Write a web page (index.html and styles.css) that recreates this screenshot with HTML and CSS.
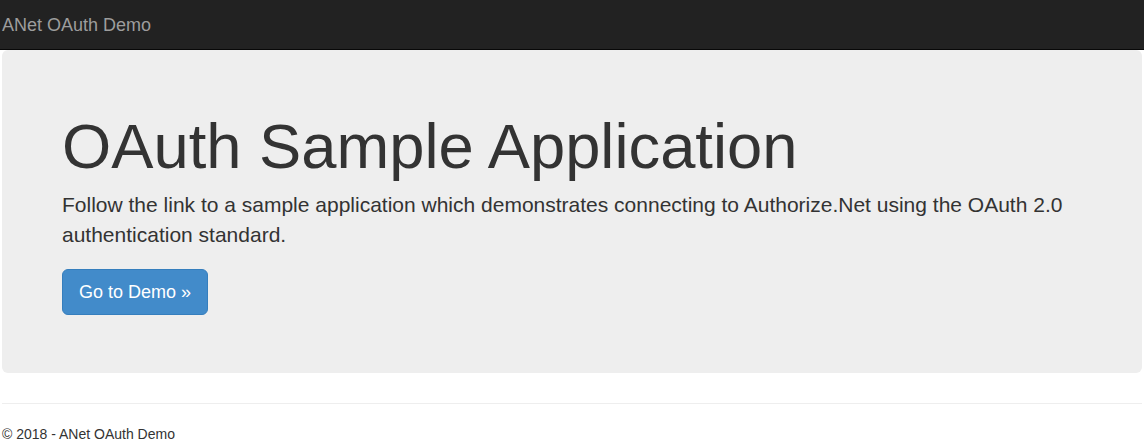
FILE: index.html
```html
<!DOCTYPE html>
<html>
<head>
<meta charset="utf-8">
<title>ANet OAuth Demo</title>
<link rel="stylesheet" href="styles.css">
</head>
<body>
<div class="navbar">
  <div class="container">
    <a class="navbar-brand" href="#">ANet OAuth Demo</a>
  </div>
</div>
<div class="container body-content">
  <div class="jumbotron">
    <h1>OAuth Sample Application</h1>
    <p class="lead">Follow the link to a sample application which demonstrates connecting to Authorize.Net using the OAuth 2.0 authentication standard.</p>
    <p class="actions"><a class="btn btn-primary btn-lg" href="#">Go to Demo &raquo;</a></p>
  </div>
  <hr class="rule">
  <footer class="footer">
    <p>&copy; 2018 - ANet OAuth Demo</p>
  </footer>
</div>
</body>
</html>
```

FILE: styles.css
```css
* { box-sizing: border-box; }
html, body { margin: 0; }
body {
  font-family: "Liberation Sans", Arial, sans-serif;
  font-size: 14px;
  line-height: 1.428571429;
  color: #333;
  background: #fff;
  padding-top: 50px;
}
.navbar {
  position: fixed;
  top: 0; left: 0; right: 0;
  height: 50px;
  background: #222;
  border-bottom: 1px solid #080808;
  z-index: 10;
}
.container { padding: 0 2px; }
.navbar-brand {
  display: block;
  padding: 15px 0;
  font-size: 18px;
  line-height: 20px;
  color: #9d9d9d;
  text-decoration: none;
}
.jumbotron {
  background: #eee;
  border-radius: 6px;
  padding: 48px 60px;
  margin-bottom: 30px;
}
.jumbotron h1 {
  font-size: 63.3px;
  font-weight: 500;
  line-height: 1.1;
  margin: 14px 0 8px;
  color: inherit;
}
.jumbotron p {
  font-size: 21px;
  font-weight: 200;
  line-height: 1.428571429;
  margin: 0 0 19px;
}
.jumbotron p.actions { margin-bottom: 10px; }
.btn {
  display: inline-block;
  text-decoration: none;
  vertical-align: middle;
  border: 1px solid transparent;
}
.btn-primary {
  color: #fff;
  background: #428bca;
  border-color: #357ebd;
}
.btn-lg {
  padding: 11px 16px 9px;
  font-size: 18px;
  line-height: 1.33;
  border-radius: 6px;
}
.rule {
  margin: 20px 0;
  border: 0;
  border-top: 1px solid #eee;
}
.footer p { margin: 0 0 10px; }
```
